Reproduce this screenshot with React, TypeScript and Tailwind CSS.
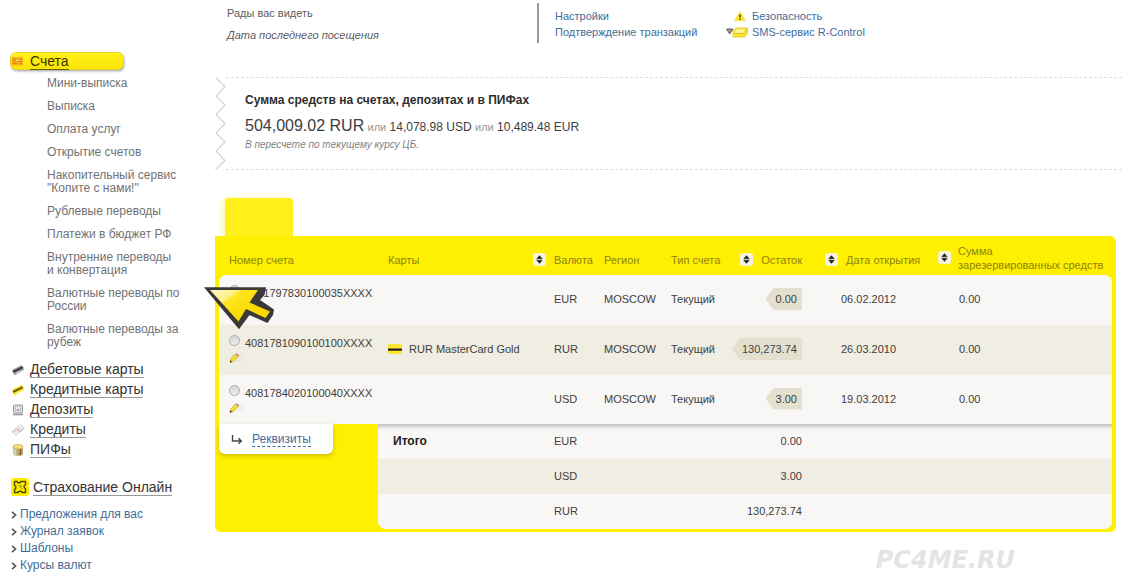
import React from "react";

const subItems: string[][] = [
  ["Мини-выписка"],
  ["Выписка"],
  ["Оплата услуг"],
  ["Открытие счетов"],
  ["Накопительный сервис", "\"Копите с нами!\""],
  ["Рублевые переводы"],
  ["Платежи в бюджет РФ"],
  ["Внутренние переводы", "и конвертация"],
  ["Валютные переводы по", "России"],
  ["Валютные переводы за", "рубеж"],
];

const accounts = [
  { number: "4081797830100035XXXX", card: "", currency: "EUR", balance: "0.00", date: "06.02.2012" },
  { number: "4081781090100100XXXX", card: "RUR MasterCard Gold", currency: "RUR", balance: "130,273.74", date: "26.03.2010" },
  { number: "4081784020100040XXXX", card: "", currency: "USD", balance: "3.00", date: "19.03.2012" },
];

const totals = [
  { label: "Итого", currency: "EUR", sum: "0.00" },
  { label: "", currency: "USD", sum: "3.00" },
  { label: "", currency: "RUR", sum: "130,273.74" },
];

function CardIcon({ body, stripe }: { body: string; stripe: string }) {
  return (
    <svg width="14" height="14" viewBox="0 0 14 14" aria-hidden="true">
      <path d="M1 7 10.500 2 13.300 6.500 3.500 12.500z" fill={body} />
      <path d="M1.600 8 11.300 3.200 12.300 4.900 2.600 10z" fill={stripe} />
      <path d="M5.200 10.300 8 8.800" stroke="#fff" strokeWidth="0.900" opacity="0.700" />
    </svg>
  );
}

function DepositIcon() {
  return (
    <svg width="14" height="14" viewBox="0 0 14 14" aria-hidden="true">
      <rect x="2.5" y="2" width="9" height="8" rx="1" fill="#e4e4e4" stroke="#9a9a9a" />
      <rect x="4.5" y="3.8" width="5" height="4" fill="#fafafa" stroke="#b5b5b5" strokeWidth="0.8" />
      <path d="M5.5 6 7 7 8.5 6" stroke="#666" strokeWidth="0.8" fill="none" />
      <path d="M2 11.500h10" stroke="#9a9a9a" strokeWidth="1.600" />
    </svg>
  );
}

function CreditIcon() {
  return (
    <svg width="14" height="14" viewBox="0 0 14 14" aria-hidden="true">
      <path d="M0.5 8.500 9.500 1.500 13.5 5 5 12.500z" fill="#ececec" stroke="#cfcfcf" strokeWidth="0.8" />
      <circle cx="7.2" cy="7" r="1.800" fill="#f0c9aa" />
      <path d="M2.600 8.800 4.600 7.200M9 8.800 12 6" stroke="#98a0a8" strokeWidth="1" />
    </svg>
  );
}

function FundIcon() {
  return (
    <svg width="14" height="14" viewBox="0 0 14 14" aria-hidden="true">
      <path d="M2 4v7.2c0 .8 2.2 1.5 5 1.5s5-.7 5-1.5V4z" fill="#b5a565" />
      <path d="M3 4.800v7.200M4.800 5.200v7.300" stroke="#e2e0da" strokeWidth="1.200" />
      <path d="M9.5 5v7.4" stroke="#7a6320" strokeWidth="1.2" />
      <ellipse cx="7" cy="3.8" rx="5" ry="2.2" fill="#f4e07a" stroke="#c9a93c" strokeWidth="0.7" />
    </svg>
  );
}

function AccountsIcon() {
  return (
    <svg width="13" height="12" viewBox="0 0 13 12" aria-hidden="true">
      <rect x="0.5" y="2" width="11.5" height="8.5" rx="1" fill="#f8b41b" />
      <path d="M1.5 4.2h4M7 4.2h4.5M1.5 6.4h3M6 6.4h5M1.5 8.6h4.5M8 8.6h3" stroke="#e07f16" strokeWidth="1" />
      <path d="M5 5.3h3" stroke="#ffe38a" strokeWidth="0.9" />
    </svg>
  );
}

function InsuranceIcon() {
  return (
    <svg width="18" height="18" viewBox="0 0 18 18" aria-hidden="true">
      <rect width="18" height="18" rx="3" fill="#ffec00" />
      <path
        d="M3.500 3.500h2.500l1 1.300h2l1-1.300h4.500v3.200l-1.300.8v2l1.300 1v4h-3.300l-1-1.300h-2l-1 1.300H3.500v-3l1.300-1v-2l-1.300-1z"
        fill="none"
        stroke="#4f4800"
        strokeWidth="1.400"
        strokeLinejoin="round"
      />
      <path d="M7.500 7.500h1M10.500 7.500 9 9.500M10.500 10.500h1" stroke="#6b6200" strokeWidth="1.200" />
    </svg>
  );
}

function PencilIcon() {
  return (
    <svg width="16" height="10" viewBox="0 0 16 10" aria-hidden="true">
      <path d="M9 2.5h6M8 5h7M7 7.5h8" stroke="#e2e0dc" strokeWidth="0.8" />
      <path d="M1 9.400 1.600 6 6.600 1 9.300 3.500 4.200 8.700z" fill="#f7dc2e" stroke="#b3962a" strokeWidth="0.6" />
      <path d="M6.600 1 7.700 .2 10.300 2.500 9.300 3.500z" fill="#a88f8a" />
      <path d="M.900 9.500 1.500 7.200 3.200 8.900z" fill="#333" />
    </svg>
  );
}

function WarningIcon() {
  return (
    <svg width="12" height="10" viewBox="0 0 12 10" aria-hidden="true">
      <path d="M6 .5 11.5 9.5H.5z" fill="#ffe62e" stroke="#f3dc3b" strokeWidth="0.7" strokeLinejoin="round" />
      <path d="M6 3.4v3" stroke="#332c00" strokeWidth="1.3" />
      <circle cx="6" cy="8" r="0.8" fill="#332c00" />
    </svg>
  );
}

function SmsIcon() {
  return (
    <svg width="22" height="11" viewBox="0 0 22 11" aria-hidden="true">
      <path d="M.5 2H7L3.7 7z" fill="#9a9a9a" stroke="#444" strokeWidth="0.8" />
      <path d="M10 1h11.500v5.500l-3 3.500H7V4.500z" fill="#ffe62e" stroke="#dcc22a" strokeWidth="0.8" strokeLinejoin="round" />
      <path d="M10.500 2.500h9.500l-2.500 4H8.500z" fill="#fff79a" />
      <path d="M8.500 6.500h9l3-4.500" stroke="#d1b01e" strokeWidth="0.8" fill="none" />
    </svg>
  );
}

function SortButton({ label }: { label: string }) {
  return (
    <button
      type="button"
      aria-label={label}
      className="flex h-[13px] w-[13px] shrink-0 items-center justify-center rounded-[3px] bg-[#f6f3dc]"
    >
      <svg width="7" height="9" viewBox="0 0 7 9" aria-hidden="true">
        <path d="M3.5 .6 6.3 3.8H.7zM3.5 8.4 6.3 5.2H.7z" fill="#1c1c1c" stroke="#1c1c1c" strokeWidth="0.400" />
      </svg>
    </button>
  );
}

function Cursor() {
  return (
    <svg width="72" height="44" viewBox="0 0 72 44" aria-hidden="true">
      <defs>
        <linearGradient id="cursorFill" gradientUnits="userSpaceOnUse" x1="12" y1="0" x2="36" y2="32">
          <stop offset="0" stopColor="#fff6c0" />
          <stop offset="0.38" stopColor="#fff08a" />
          <stop offset="0.46" stopColor="#ffe620" />
          <stop offset="1" stopColor="#fbd800" />
        </linearGradient>
      </defs>
      <path d="M0 .3 62 .3 60.500 8 56 13 70 22.500 69 28 63.500 36 45.500 28 35 42.300z" fill="#3a3838" />
      <path d="M6 3 54 3 45.500 15.500 66 24.500 61.500 31 42 22 34.500 34.500z" fill="url(#cursorFill)" />
    </svg>
  );
}

const sections = [
  { label: "Дебетовые карты", icon: <CardIcon body="#a2a2a2" stripe="#3b3b3b" /> },
  { label: "Кредитные карты", icon: <CardIcon body="#ffe61a" stripe="#6e6200" /> },
  { label: "Депозиты", icon: <DepositIcon /> },
  { label: "Кредиты", icon: <CreditIcon /> },
  { label: "ПИФы", icon: <FundIcon /> },
];

const extraLinks = ["Предложения для вас", "Журнал заявок", "Шаблоны", "Курсы валют"];

function Sidebar() {
  return (
    <nav className="w-[215px] shrink-0 pt-[53px] pl-[11px]">
      <a
        href="#accounts"
        className="flex h-4 w-[112px] items-center gap-[6px] rounded-[5px] bg-linear-to-b from-[#fff21a] to-[#fbe400] text-[14px] leading-4 text-[#3a3500] shadow-[1px_2px_3px_rgba(0,0,0,0.4)] ring-1 ring-[#e6d420]"
      >
        <AccountsIcon />
        <span className="border-b border-[#6b6200]">Счета</span>
      </a>
      <ul className="mt-2 flex flex-col gap-[10px] pl-9 text-[12px] leading-[13px] text-[#727272]">
        {subItems.map((lines) => (
          <li key={lines[0]}>
            <a href="#section" className="block">
              {lines.map((line) => (
                <span key={line} className="block whitespace-nowrap">
                  {line}
                </span>
              ))}
            </a>
          </li>
        ))}
      </ul>
      <ul className="mt-3 flex flex-col gap-[3px] text-[14px] leading-4 text-[#333]">
        {sections.map((s) => (
          <li key={s.label} className="flex items-center gap-[5px]">
            {s.icon}
            <a href="#section" className="border-b border-[#999]">
              {s.label}
            </a>
          </li>
        ))}
      </ul>
      <div className="mt-5 flex items-center gap-1 text-[14px] leading-4 text-[#333]">
        <InsuranceIcon />
        <a href="#insurance" className="border-b border-[#999]">
          Страхование Онлайн
        </a>
      </div>
      <ul className="mt-[10px] text-[12px] leading-[17px] text-[#3f6d99]">
        {extraLinks.map((l) => (
          <li key={l} className="flex items-center gap-[3px]">
            <svg width="6" height="8" viewBox="0 0 6 8" aria-hidden="true">
              <path d="M1 .8 4.6 4 1 7.2" fill="none" stroke="#555" strokeWidth="1.6" />
            </svg>
            <a href="#link">{l}</a>
          </li>
        ))}
      </ul>
    </nav>
  );
}

function TopBar() {
  return (
    <header className="flex pt-[3px] pl-3 text-[11px] text-[#5c5c5c]">
      <div className="w-[310px] pt-[2px]">
        <p className="leading-4">Рады вас видеть</p>
        <p className="mt-[6px] leading-4 italic">Дата последнего посещения</p>
      </div>
      <div className="flex h-10 border-l-2 border-[#9a9a9a] pt-[5px] pl-4 leading-4 text-[#3f6d99]">
        <div className="w-[171px]">
          <a href="#settings" className="block">
            Настройки
          </a>
          <a href="#confirm" className="block">
            Подтверждение транзакций
          </a>
        </div>
        <div>
          <a href="#security" className="flex items-center gap-[6px] pl-2">
            <WarningIcon />
            Безопасность
          </a>
          <a href="#sms" className="flex items-center gap-1">
            <SmsIcon />
            SMS-сервис R-Control
          </a>
        </div>
      </div>
    </header>
  );
}

function Summary() {
  return (
    <section className="mt-[34px] mr-1 flex h-[93px]">
      <svg width="11" height="93" viewBox="0 0 11 93" className="shrink-0" aria-hidden="true">
        <path
          d="M.5 .5 10 9.5 1 19 10 28 1 37.5 10 46.5 1 56 10 65 1 74 10 83.5 .5 92.5"
          fill="none"
          stroke="#d4d4d4"
          strokeWidth="1.200"
        />
      </svg>
      <div className="grow border-y border-dashed border-[#dedede] pt-[14px] pl-[19px]">
        <h2 className="text-[12px] leading-4 font-bold text-[#2e2e2e]">Сумма средств на счетах, депозитах и в ПИФах</h2>
        <p className="mt-2 text-[12px] leading-5 text-[#3d3d3d]">
          <span className="text-[16px]">504,009.02 RUR</span> <span className="text-[11px] text-[#999]">или</span> 14,078.98 USD{" "}
          <span className="text-[11px] text-[#999]">или</span> 10,489.48 EUR
        </p>
        <p className="text-[10px] leading-4 text-[#828282] italic">В пересчете по текущему курсу ЦБ.</p>
      </div>
    </section>
  );
}

function AccountsTable() {
  return (
    <section className="relative mt-7 mr-[10px]">
      <div className="ml-[10px] h-[38px] w-[68px] rounded-t-[4px] bg-[#fff01c] shadow-[-3px_0_5px_rgba(255,240,60,0.4)]" />
      <div className="rounded-[6px] rounded-tl-none bg-[#ffef00] px-1 pb-[3px]">
        <table className="w-full table-fixed border-separate border-spacing-0 text-left text-[11px] leading-[14px] text-[#404040]">
          <colgroup>
            <col className="w-[159px]" />
            <col className="w-[155px]" />
            <col className="w-[71px]" />
            <col className="w-[67px]" />
            <col className="w-[62px]" />
            <col className="w-[92px]" />
            <col className="w-[113px]" />
            <col />
          </colgroup>
          <thead className="text-[#8d8410]">
            <tr className="h-[39px]">
              <th className="p-0 pt-2 pl-[10px] font-normal">Номер счета</th>
              <th className="p-0 pt-2 pl-[10px] font-normal">Карты</th>
              <th className="p-0 pt-2 font-normal">
                <div className="flex items-center gap-2">
                  <SortButton label="Сортировать по валюте" />
                  Валюта
                </div>
              </th>
              <th className="p-0 pt-2 font-normal">Регион</th>
              <th className="p-0 pt-2 font-normal">Тип счета</th>
              <th className="p-0 pt-2 pr-[23px] font-normal">
                <div className="flex items-center justify-end gap-2">
                  <SortButton label="Сортировать по остатку" />
                  Остаток
                </div>
              </th>
              <th className="p-0 pt-2 font-normal">
                <div className="flex items-center gap-2">
                  <SortButton label="Сортировать по дате" />
                  <span className="whitespace-nowrap">Дата открытия</span>
                </div>
              </th>
              <th className="p-0 pt-1 font-normal">
                <div className="flex items-center gap-[7px]">
                  <SortButton label="Сортировать по сумме" />
                  <span className="whitespace-nowrap">
                    Сумма
                    <br />
                    зарезервированных средств
                  </span>
                </div>
              </th>
            </tr>
          </thead>
          <tbody>
            {accounts.map((a) => (
              <tr key={a.number} className="group h-[50px] bg-[#f9f7f5] last:h-[49px] even:bg-[#f0ede2]">
                <td className="bg-inherit p-0 pt-[10px] pl-[10px] align-top group-first:rounded-tl-[8px]">
                  <label className="flex gap-[5px]">
                    <span className="flex w-[11px] flex-col gap-[7px]">
                      <input
                        type="radio"
                        name="account"
                        className="h-[11px] w-[11px] appearance-none rounded-full border border-[#a9a9a9] bg-linear-to-b from-[#d6d6d4] to-[#ededeb]"
                      />
                      <PencilIcon />
                    </span>
                    <span className="leading-4">{a.number}</span>
                  </label>
                </td>
                <td className="bg-inherit p-0 pb-[2px] pl-[10px]">
                  {a.card && (
                    <div className="flex items-center gap-[7px]">
                      <svg width="14" height="10" viewBox="0 0 14 10" aria-hidden="true">
                        <rect width="14" height="10" rx="2" fill="#ffe530" />
                        <rect y="4.5" width="14" height="2.2" fill="#1d1d1d" />
                      </svg>
                      {a.card}
                    </div>
                  )}
                </td>
                <td className="bg-inherit p-0 pb-[2px] pl-[21px]">{a.currency}</td>
                <td className="bg-inherit p-0 pb-[2px]">MOSCOW</td>
                <td className="bg-inherit p-0 pb-[2px]">Текущий</td>
                <td className="bg-inherit p-0 pr-[23px] pb-[2px]">
                  <div className="flex justify-end">
                    <span className="bg-[#e3e0d0] py-1 pr-[5px] pl-[10px] [clip-path:polygon(0_50%,8px_0,100%_0,100%_100%,8px_100%)]">
                      {a.balance}
                    </span>
                  </div>
                </td>
                <td className="bg-inherit p-0 pb-[2px] pl-4">{a.date}</td>
                <td className="bg-inherit p-0 pb-[2px] pl-[21px] group-first:rounded-tr-[8px]">0.00</td>
              </tr>
            ))}
          </tbody>
          <tfoot>
            {totals.map((t, i) => (
              <tr
                key={t.currency}
                className="group h-[35px] bg-[#f9f7f5] even:bg-[#f0ede2] first:[&>td]:shadow-[inset_0_7px_5px_-5px_rgba(0,0,0,0.28)]"
              >
                {i === 0 && (
                  <th rowSpan={3} className="bg-[#ffef00] p-0 align-top font-normal">
                    <div className="flex h-[30px] w-[114px] items-center gap-[9px] rounded-b-[6px] bg-white pl-3 shadow-[0_2px_4px_rgba(120,100,0,0.35)]">
                      <svg width="12" height="11" viewBox="0 0 12 11" aria-hidden="true">
                        <path d="M1.5 1v6H10M7.5 4.3 10.3 7 7.5 9.7" fill="none" stroke="#444" strokeWidth="1.4" />
                      </svg>
                      <a href="#details" className="border-b border-dashed border-[#3f6d99] text-[12px] text-[#3f6d99]">
                        Реквизиты
                      </a>
                    </div>
                  </th>
                )}
                <td className="bg-inherit p-0 pb-[2px] pl-[15px] text-[12px] font-bold text-[#222] group-last:rounded-bl-[8px]">
                  {t.label}
                </td>
                <td className="bg-inherit p-0 pb-[2px] pl-[21px]">{t.currency}</td>
                <td className="bg-inherit p-0" />
                <td className="bg-inherit p-0" />
                <td className="bg-inherit p-0 pr-[23px] pb-[2px] text-right">{t.sum}</td>
                <td className="bg-inherit p-0" />
                <td className="bg-inherit p-0 group-last:rounded-br-[8px]" />
              </tr>
            ))}
          </tfoot>
        </table>
      </div>
      <div className="pointer-events-none absolute top-[89px] left-[-11px]">
        <Cursor />
      </div>
    </section>
  );
}

export default function App() {
  return (
    <div className="flex min-h-screen bg-white font-['Liberation_Sans',Arial,sans-serif]">
      <Sidebar />
      <main className="min-w-0 grow">
        <TopBar />
        <Summary />
        <AccountsTable />
        <p className="mt-4 mr-[111px] text-right font-['DejaVu_Sans',sans-serif] text-[24px] leading-6 font-bold text-[#e4e4e4] italic">
          PC4ME.RU
        </p>
      </main>
    </div>
  );
}
